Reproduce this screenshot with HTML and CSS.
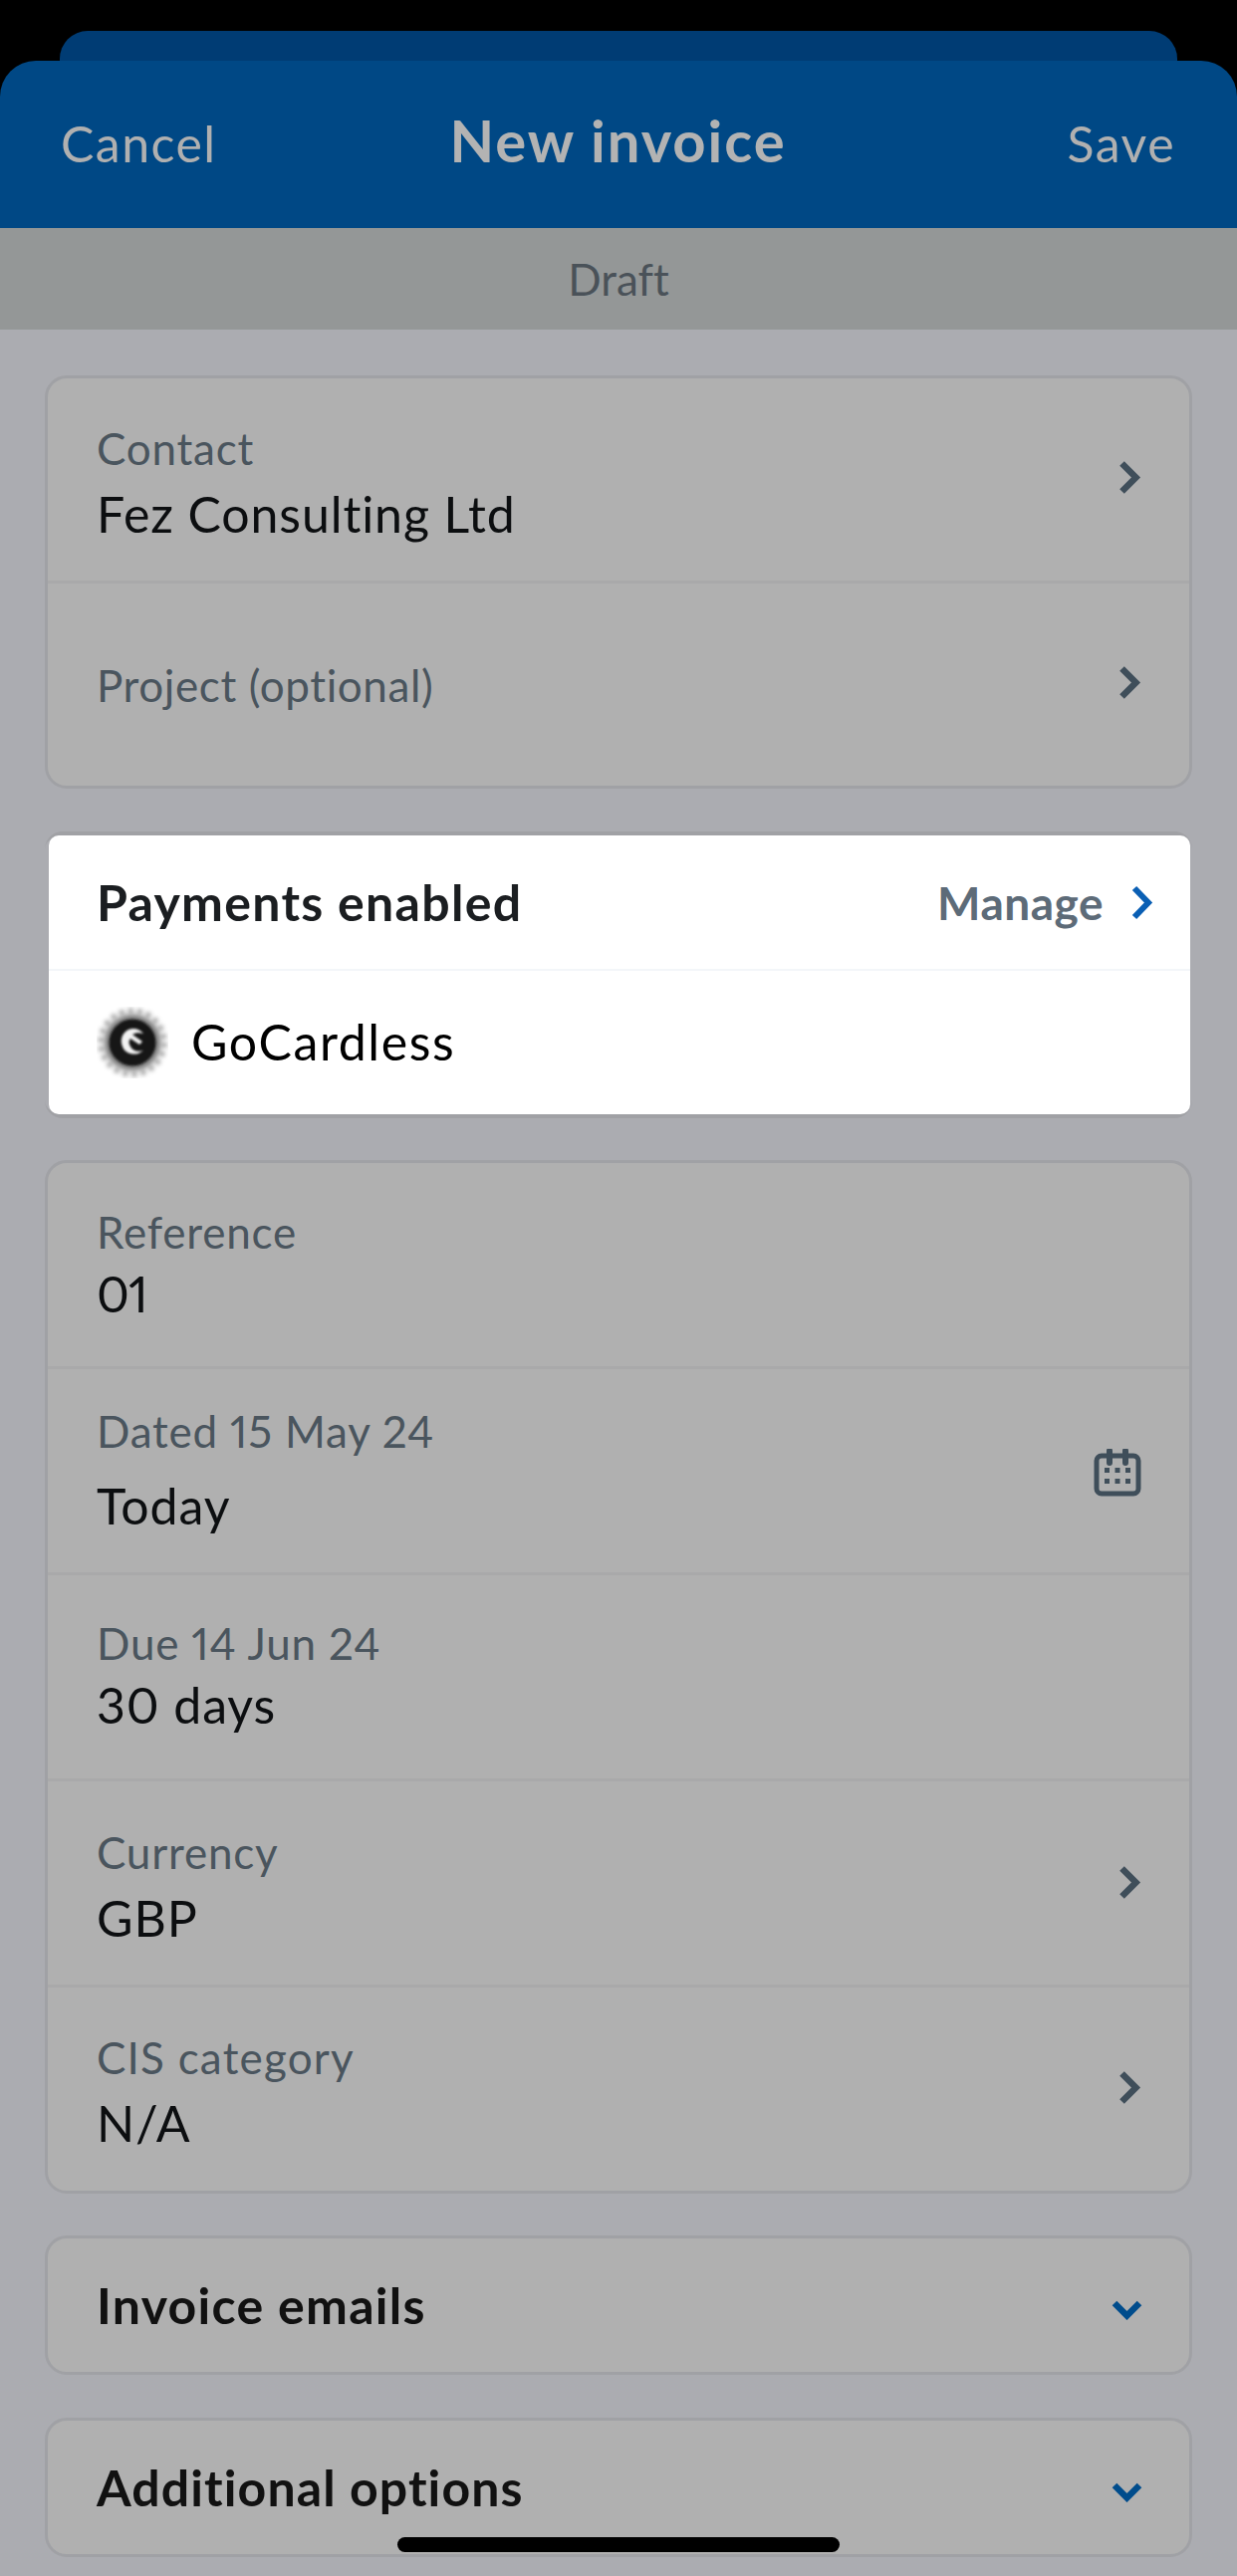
FILE: index.html
```html
<!DOCTYPE html>
<html lang="en">
<head>
<meta charset="utf-8">
<title>New invoice</title>
<link rel="stylesheet" href="styles.css">
</head>
<body>
<div class="screen">
  <div class="back-sheet"></div>
  <header class="topbar">
    <span class="top-action">Cancel</span>
    <h1 class="top-title">New invoice</h1>
    <span class="top-action top-action-end">Save</span>
  </header>
  <div class="status">Draft</div>
  <main class="content">
    <section class="card card-contact">
      <div class="row">
        <div class="stack nudge-2"><span class="label">Contact</span><span class="value gap-mid">Fez Consulting Ltd</span></div>
        <svg class="chev chev-up" viewBox="0 0 20 33"><path d="M2.500 2.500l14 14-14 14"/></svg>
      </div>
      <div class="row">
        <div class="stack"><span class="label label-tight">Project (optional)</span></div>
        <svg class="chev chev-up" viewBox="0 0 20 33"><path d="M2.500 2.500l14 14-14 14"/></svg>
      </div>
    </section>

    <section class="pay-wrap">
      <div class="pay-card">
        <div class="pay-head">
          <span class="pay-title">Payments enabled</span>
          <span class="pay-manage">Manage</span>
          <svg class="chev-blue" viewBox="0 0 23 35"><path d="M4 3l14 14.500L4 32"/></svg>
        </div>
        <div class="pay-provider">
          <svg class="gc-logo" viewBox="0 0 72 72">
            <defs>
              <filter id="soft" x="-20%" y="-20%" width="140%" height="140%"><feGaussianBlur stdDeviation="1.200"/></filter>
              <filter id="softer" x="-20%" y="-20%" width="140%" height="140%"><feGaussianBlur stdDeviation="2"/></filter>
            </defs>
            <circle cx="36" cy="36" r="31.500" fill="none" stroke="#a4a4a4" stroke-width="6" stroke-dasharray="5 4" filter="url(#softer)"/>
            <circle cx="36" cy="36" r="28.500" fill="#828282" filter="url(#softer)"/>
            <circle cx="36" cy="36" r="23.500" fill="#161616" filter="url(#soft)"/>
            <path d="M47 27c-4-5-10-6-15-4-6 3-9 10-6 17 2 6 9 9 16 7l5-3c-6 2-11 0-13-4-2-3-2-6 0-8l9 6 3-3-10-7c3-2 7-2 11-1z" fill="#f2f2f2" filter="url(#soft)"/>
          </svg>
          <span class="value value-provider">GoCardless</span>
        </div>
      </div>
    </section>

    <section class="card card-details">
      <div class="row">
        <div class="stack lift-1"><span class="label">Reference</span><span class="value value-num gap-tight">01</span></div>
      </div>
      <div class="row">
        <div class="stack lift-1"><span class="label">Dated 15 May 24</span><span class="value gap-wide">Today</span></div>
        <svg class="cal" viewBox="0 0 48 48">
          <rect x="3" y="7" width="42" height="38" rx="5"/>
          <path d="M16 2v12M32 2v12"/>
          <g class="cal-dots">
            <rect x="11" y="19" width="5" height="5"/><rect x="21.500" y="19" width="5" height="5"/><rect x="32" y="19" width="5" height="5"/>
            <rect x="11" y="30" width="5" height="5"/><rect x="21.500" y="30" width="5" height="5"/><rect x="32" y="30" width="5" height="5"/>
          </g>
        </svg>
      </div>
      <div class="row">
        <div class="stack lift-2"><span class="label">Due 14 Jun 24</span><span class="value gap-tight">30 days</span></div>
      </div>
      <div class="row">
        <div class="stack nudge-3"><span class="label">Currency</span><span class="value gap-mid">GBP</span></div>
        <svg class="chev chev-slight" viewBox="0 0 20 33"><path d="M2.500 2.500l14 14-14 14"/></svg>
      </div>
      <div class="row">
        <div class="stack nudge-2"><span class="label label-wide">CIS category</span><span class="value gap-mid">N/A</span></div>
        <svg class="chev chev-more" viewBox="0 0 20 33"><path d="M2.500 2.500l14 14-14 14"/></svg>
      </div>
    </section>

    <section class="card collapse">
      <span class="collapse-title">Invoice emails</span>
      <svg class="chev-down" viewBox="0 0 31 20"><path d="M3 3l12.500 12.500L28 3"/></svg>
    </section>
    <section class="card collapse">
      <span class="collapse-title collapse-title-long">Additional options</span>
      <svg class="chev-down" viewBox="0 0 31 20"><path d="M3 3l12.500 12.500L28 3"/></svg>
    </section>
  </main>
  <div class="home-indicator"></div>
</div>
</body>
</html>
```
FILE: styles.css
```css
* { box-sizing: border-box; }
html, body { margin: 0; padding: 0; background: #000; }
body {
  font-family: "Lato", "Open Sans", sans-serif;
  font-variant-ligatures: none;
  font-variant-numeric: proportional-nums;
}
.screen {
  position: relative;
  width: 1242px;
  height: 2587px;
  overflow: hidden;
  padding-top: 61px;
  background: #000;
}
.back-sheet {
  position: absolute;
  top: 31px;
  left: 60px;
  width: 1122px;
  height: 50px;
  background: #003c74;
  border-radius: 28px 28px 0 0;
}
.topbar {
  position: relative;
  height: 168px;
  padding: 0 62px 0 61px;
  background: #004885;
  border-radius: 36px 36px 0 0;
  display: grid;
  grid-template-columns: 1fr auto 1fr;
  align-items: center;
  color: #b0b0b0;
}
.top-action { font-size: 50px; letter-spacing: 1.450px; margin-top: -3px; }
.top-action-end { text-align: right; }
.top-title { margin: -10px 0 0 0; font-size: 58px; font-weight: 700; letter-spacing: 1.950px; color: #b3b3b3; }
.status {
  height: 102px;
  background: #949797;
  color: #4a5259;
  font-size: 44px;
  display: flex;
  align-items: center;
  justify-content: center;
}
.content {
  height: 2256px;
  padding: 46px 45px 0;
  background: #abacb1;
  display: flex;
  flex-direction: column;
  gap: 42px;
}
.card {
  background: #b0b0b0;
  border: 3px solid #a0a1a5;
  border-radius: 22px;
}
.card-contact { height: 415px; }
.card-contact .row { height: 206px; }
.card-contact .row:last-child { height: 203px; }
.card-details { height: 1038px; }
.row {
  height: 207px;
  padding: 0 50px 0 49px;
  display: flex;
  align-items: center;
  justify-content: space-between;
  border-bottom: 3px solid #a9a9aa;
}
.row:last-child { border-bottom: 0; height: 204px; }
.stack { display: flex; flex-direction: column; }
.nudge-2 { margin-top: 4px; }
.nudge-3 { margin-top: 6px; }
.lift-1 { margin-bottom: 3px; }
.lift-2 { margin-bottom: 5px; }
.label { font-size: 44px; line-height: 56px; letter-spacing: 0.800px; color: #4a555e; }
.label-tight { letter-spacing: 0.600px; }
.label-wide { letter-spacing: 1.200px; }
.value { font-size: 50px; line-height: 60px; letter-spacing: 0.900px; color: #0c0e10; }
.value-num { letter-spacing: -0.800px; }
.gap-tight { margin-top: 4px; }
.gap-mid { margin-top: 8px; }
.gap-wide { margin-top: 17px; }
.chev { width: 20px; height: 33px; flex: none; overflow: visible; }
.chev path { fill: none; stroke: #3f4e5a; stroke-width: 6.500; }
.chev-up { margin-top: -4px; }
.chev-slight { margin-top: -2px; }
.chev-more { margin-top: -3px; }
.cal { width: 48px; height: 48px; margin-right: -2px; margin-top: 4px; flex: none; }
.cal > rect { fill: none; stroke: #3f4e5a; stroke-width: 5; }
.cal > path { fill: none; stroke: #3f4e5a; stroke-width: 6; stroke-linecap: round; }
.cal-dots rect { fill: #3f4e5a; }
.pay-wrap {
  margin-top: 1px;
  height: 288px;
  padding: 0 2px 0 4px;
  border-top: 4px solid #a0a1a5;
  border-bottom: 4px solid #a0a1a5;
  border-radius: 18px;
}
.pay-card {
  height: 280px;
  background: #fff;
  border-radius: 10px;
}
.pay-head {
  height: 136px;
  padding: 0 37px 0 48px;
  display: flex;
  align-items: center;
  border-bottom: 2px solid #f3f6f9;
}
.pay-title { font-size: 50px; font-weight: 700; letter-spacing: 1.300px; color: #1b1e21; flex: 1; }
.pay-manage { font-size: 46px; font-weight: 700; letter-spacing: 0.500px; color: #5d6b78; margin-right: 27px; }
.chev-blue { width: 23px; height: 35px; flex: none; }
.chev-blue path { fill: none; stroke: #0a5fb4; stroke-width: 6; }
.pay-provider {
  height: 144px;
  padding: 0 48px;
  display: flex;
  align-items: center;
  gap: 23px;
}
.value-provider { color: #000; letter-spacing: 1.600px; margin-top: -3px; }
.gc-logo { width: 72px; height: 72px; flex: none; }
.collapse {
  height: 140px;
  padding: 0 47px 0 49px;
  display: flex;
  align-items: center;
  justify-content: space-between;
}
.collapse + .collapse { margin-top: 1px; }
.collapse-title { font-size: 50px; font-weight: 700; letter-spacing: 1.300px; color: #111; margin-top: 0; }
.collapse-title-long { letter-spacing: 1.100px; }
.chev-down { width: 31px; height: 20px; margin-top: 10px; flex: none; }
.chev-down path { fill: none; stroke: #004c8c; stroke-width: 6.500; }
.home-indicator {
  position: absolute;
  left: 399px;
  top: 2548px;
  width: 444px;
  height: 15px;
  background: #000;
  border-radius: 8px;
}
```
